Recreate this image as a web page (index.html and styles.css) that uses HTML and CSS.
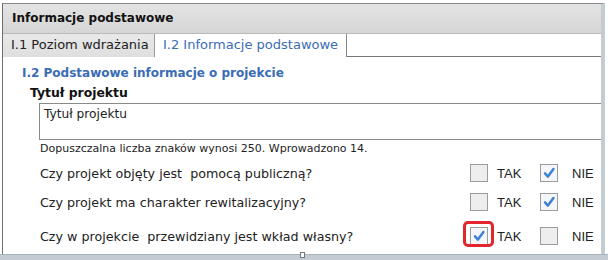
FILE: index.html
```html
<!DOCTYPE html>
<html lang="pl">
<head>
<meta charset="utf-8">
<link rel="stylesheet" href="styles.css">
</head>
<body>
<div class="page">
  <div class="panel">
    <div class="header">Informacje podstawowe</div>
    <div class="tabs">
      <div class="tab">I.1 Poziom wdrażania</div>
      <div class="tab active">I.2 Informacje podstawowe</div>
      <div class="tab-fill"></div>
    </div>
    <div class="content">
      <div class="section-title">I.2 Podstawowe informacje o projekcie</div>
      <div class="field-label">Tytuł projektu</div>
      <div class="textarea">Tytuł projektu</div>
      <div class="hint">Dopuszczalna liczba znaków wynosi 250. Wprowadzono 14.</div>
      <div class="row r1">
        <div class="q">Czy projekt objęty jest&nbsp; pomocą publiczną?</div>
        <div class="opt"><span class="cb"></span><span class="lbl">TAK</span></div>
        <div class="opt"><span class="cb checked"><svg viewBox="0 0 18 18"><path d="M4.5 9.5 L7.8 13 L14 4.5" /></svg></span><span class="lbl">NIE</span></div>
      </div>
      <div class="row r2">
        <div class="q">Czy projekt ma charakter rewitalizacyjny?</div>
        <div class="opt"><span class="cb"></span><span class="lbl">TAK</span></div>
        <div class="opt"><span class="cb checked"><svg viewBox="0 0 18 18"><path d="M4.5 9.5 L7.8 13 L14 4.5" /></svg></span><span class="lbl">NIE</span></div>
      </div>
      <div class="row r3">
        <div class="q">Czy w projekcie&nbsp; przewidziany jest wkład własny?</div>
        <div class="opt"><span class="cb checked highlight"><svg viewBox="0 0 18 18"><path d="M4.5 9.5 L7.8 13 L14 4.5" /></svg></span><span class="lbl">TAK</span></div>
        <div class="opt"><span class="cb"></span><span class="lbl">NIE</span></div>
      </div>
    </div>
  </div>
  <div class="bottombar"><span class="notch"></span></div>
</div>
</body>
</html>
```
FILE: styles.css
```css
html, body {
  margin: 0;
  padding: 0;
  background: #ffffff;
}
.page {
  width: 608px;
  height: 260px;
  overflow: hidden;
  padding-top: 3px;
  box-sizing: border-box;
  font-family: "DejaVu Sans", Verdana, sans-serif;
  color: #1a1a1a;
}
.panel {
  margin-left: 2px;
  width: 603px;
  height: 251px;
  box-sizing: border-box;
  border-top: 1px solid #8a8a8a;
  border-left: 1px solid #6e6e6e;
  border-right: 4px solid #c3ccd3;
  overflow: hidden;
  background: #fff;
}
.header {
  height: 30px;
  box-sizing: border-box;
  background: linear-gradient(#e4e4e4, #d5d5d5);
  border-bottom: 1px solid #b9b9b9;
  font-weight: bold;
  font-size: 12px;
  line-height: 29px;
  padding-left: 9px;
  color: #111;
}
.tabs {
  display: flex;
  height: 23px;
}
.tab {
  flex: none;
  font-size: 13px;
  line-height: 22px;
  padding: 0 6px 0 8px;
  background: linear-gradient(#e9e9e9, #dedede);
  color: #222;
  border-right: 1px solid #9a9a9a;
  box-sizing: border-box;
  width: 152px;
  white-space: nowrap;
}
.tab.active {
  background: #fff;
  color: #3a6db5;
  border-right: 1px solid #888;
  width: 192px;
  padding-left: 8px;
}
.tab-fill {
  flex: 1;
  border-bottom: 1px solid #777;
}
.content {
  padding-top: 6px;
}
.section-title {
  font-weight: bold;
  font-size: 12px;
  color: #3a6db5;
  padding-left: 19px;
  line-height: 20px;
}
.field-label {
  font-weight: bold;
  font-size: 12.4px;
  padding-left: 27px;
  line-height: 20px;
  color: #111;
}
.textarea {
  margin-left: 36px;
  margin-top: 0;
  width: 620px;
  height: 37px;
  box-sizing: border-box;
  border: 1px solid #8a8a8a;
  border-right: none;
  font-size: 12.2px;
  padding: 3px 4px;
  color: #222;
}
.hint {
  font-size: 11px;
  padding-left: 37px;
  line-height: 18px;
  color: #222;
}
.row {
  display: flex;
  align-items: center;
  padding-left: 37px;
}
.r1 { height: 30px; }
.r2 { height: 28px; }
.r3 { height: 40px; }
.q {
  flex: none;
  width: 430px;
  font-size: 12.7px;
  color: #222;
  white-space: nowrap;
}
.opt {
  flex: none;
  display: flex;
  align-items: center;
  width: 70px;
}
.cb {
  position: relative;
  width: 18px;
  height: 18px;
  box-sizing: border-box;
  border: 1px solid #9c9c9c;
  background: #eeeeee;
  display: inline-block;
}
.cb.checked {
  background: #f4f6fa;
}
.cb svg {
  position: absolute;
  left: 0;
  top: 0;
  width: 16px;
  height: 16px;
}
.cb svg path {
  fill: none;
  stroke: #3f7fd6;
  stroke-width: 2.8;
  stroke-linecap: round;
  stroke-linejoin: round;
}
.cb.highlight::after {
  content: "";
  position: absolute;
  left: -8px;
  top: -7px;
  width: 31px;
  height: 26px;
  box-sizing: border-box;
  border: 3px solid #e2262c;
  border-radius: 5px;
}
.lbl {
  font-family: "Liberation Sans", Arial, sans-serif;
  font-size: 13px;
  color: #222;
  margin-left: 9px;
}
.opt + .opt .lbl {
  margin-left: 14px;
}
.bottombar {
  position: relative;
  height: 6px;
  background: #c3ccd3;
  border-top: 1px solid #a9b3ba;
}
.notch {
  position: absolute;
  left: 300px;
  top: -3px;
  width: 3px;
  height: 4px;
  border: 1px solid #777;
  background: #fff;
}
```
